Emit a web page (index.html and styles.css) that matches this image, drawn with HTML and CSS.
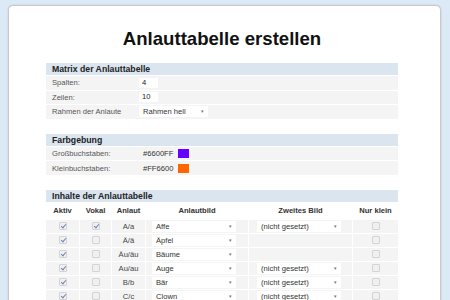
FILE: index.html
```html
<!DOCTYPE html>
<html lang="de">
<head>
  <meta charset="UTF-8" />
  <title>Anlauttabelle erstellen</title>
  <link rel="stylesheet" href="styles.css">
</head>
<body>
  <div class="card">
    <h1 class="page-title">Anlauttabelle erstellen</h1>

    <div class="section">
      <div class="section-head">Matrix der Anlauttabelle</div>
      <div class="row">
        <span class="label">Spalten:</span>
        <span class="value"><span class="field">4</span></span>
      </div>
      <div class="row">
        <span class="label">Zeilen:</span>
        <span class="value"><span class="field">10</span></span>
      </div>
      <div class="row">
        <span class="label">Rahmen der Anlaute</span>
        <span class="value"><span class="select select-frame">Rahmen hell</span></span>
      </div>
    </div>

    <div class="section">
      <div class="section-head">Farbgebung</div>
      <div class="row">
        <span class="label">Großbuchstaben:</span>
        <span class="value"><span class="hex">#6600FF</span><span class="swatch swatch-upper"></span></span>
      </div>
      <div class="row">
        <span class="label">Kleinbuchstaben:</span>
        <span class="value"><span class="hex">#FF6600</span><span class="swatch swatch-lower"></span></span>
      </div>
    </div>

    <div class="section">
      <div class="section-head">Inhalte der Anlauttabelle</div>
      <div class="grid grid-head">
        <span>Aktiv</span>
        <span>Vokal</span>
        <span>Anlaut</span>
        <span>Anlautbild</span>
        <span>Zweites Bild</span>
        <span>Nur klein</span>
      </div>
      <div class="grid">
        <span><i class="check on"></i></span>
        <span><i class="check on"></i></span>
        <span>A/a</span>
        <span class="cell-select"><span class="select">Affe</span></span>
        <span class="cell-select second"><span class="select">(nicht gesetzt)</span></span>
        <span><i class="check"></i></span>
      </div>
      <div class="grid">
        <span><i class="check on"></i></span>
        <span><i class="check"></i></span>
        <span>Ä/ä</span>
        <span class="cell-select"><span class="select">Äpfel</span></span>
        <span class="cell-select second"></span>
        <span><i class="check"></i></span>
      </div>
      <div class="grid">
        <span><i class="check on"></i></span>
        <span><i class="check"></i></span>
        <span>Äu/äu</span>
        <span class="cell-select"><span class="select">Bäume</span></span>
        <span class="cell-select second"></span>
        <span><i class="check"></i></span>
      </div>
      <div class="grid">
        <span><i class="check on"></i></span>
        <span><i class="check"></i></span>
        <span>Au/au</span>
        <span class="cell-select"><span class="select">Auge</span></span>
        <span class="cell-select second"><span class="select">(nicht gesetzt)</span></span>
        <span><i class="check"></i></span>
      </div>
      <div class="grid">
        <span><i class="check on"></i></span>
        <span><i class="check"></i></span>
        <span>B/b</span>
        <span class="cell-select"><span class="select">Bär</span></span>
        <span class="cell-select second"><span class="select">(nicht gesetzt)</span></span>
        <span><i class="check"></i></span>
      </div>
      <div class="grid">
        <span><i class="check on"></i></span>
        <span><i class="check"></i></span>
        <span>C/c</span>
        <span class="cell-select"><span class="select">Clown</span></span>
        <span class="cell-select second"><span class="select">(nicht gesetzt)</span></span>
        <span><i class="check"></i></span>
      </div>
    </div>
  </div>
</body>
</html>
```

FILE: styles.css
```css
* { margin: 0; padding: 0; box-sizing: border-box; }
body {
  background: #dce9f6;
  font-family: 'Liberation Sans', Arial, sans-serif;
  color: #555;
  font-size: 7.6px;
  height: 300px;
  overflow: hidden;
}
.card {
  margin: 5px 9px 0 8px;
  background: #fff;
  border: 1px solid #c9c9c9;
  border-radius: 5px;
  box-shadow: 0 0 2px rgba(0,0,0,0.15);
  padding: 22px 42px 20px 37px;
  min-height: 320px;
}
.page-title {
  font-size: 18.6px;
  line-height: 21px;
  font-weight: bold;
  color: #111;
  text-align: center;
  margin-bottom: 14px;
}
.section { margin-bottom: 15px; }
.section-head {
  background: #dae5f0;
  color: #222;
  font-weight: bold;
  font-size: 8.7px;
  height: 12px;
  line-height: 12px;
  padding-left: 6px;
}
.row {
  display: grid;
  grid-template-columns: 93px 1fr;
  align-items: center;
  height: 14.6px;
  background: #f4f4f4;
  border-top: 1px solid #fff;
}
.label { padding-left: 6px; }
.value { display: flex; align-items: center; }
.field {
  background: #fff;
  width: 19px;
  height: 10px;
  line-height: 10px;
  padding-left: 3px;
  color: #222;
}
.select {
  position: relative;
  display: block;
  background: #fff;
  width: 84px;
  height: 11px;
  line-height: 11px;
  padding-left: 4px;
  color: #333;
  text-align: left;
}
.select::after {
  content: "▾";
  position: absolute;
  right: 4px;
  top: 0;
  font-size: 5px;
  color: #777;
}
.select-frame { width: 69px; }
.hex { padding-left: 4px; color: #333; }
.swatch {
  display: inline-block;
  width: 11px;
  height: 9px;
  margin-left: 5px;
}
.swatch-upper { background: #6600ff; }
.swatch-lower { background: #ff6600; }
.grid {
  display: grid;
  grid-template-columns: 33px 32px 34px 103px 104px 46px;
  height: 14px;
  align-items: center;
  text-align: center;
  color: #444;
}
.grid > span {
  background: #f4f4f4;
  height: 100%;
  display: flex;
  align-items: center;
  justify-content: center;
  border-top: 1px solid #fff;
  border-left: 1px solid #fff;
}
.grid > span:first-child { border-left: none; }
.grid-head { height: 17px; }
.grid-head > span {
  background: #fff;
  font-weight: bold;
  color: #333;
}
.grid > .cell-select { justify-content: flex-start; padding-left: 6px; }
.grid > .cell-select.second { padding-left: 8px; }
.check {
  display: inline-block;
  position: relative;
  width: 8px;
  height: 8px;
  border: 1px solid #d4d4d4;
  background: #f0f0f0;
  border-radius: 1px;
}
.check.on::after {
  content: "";
  position: absolute;
  left: 2px;
  top: 0;
  width: 2px;
  height: 4px;
  border: solid #6d86b4;
  border-width: 0 1px 1px 0;
  transform: rotate(40deg);
}
```
